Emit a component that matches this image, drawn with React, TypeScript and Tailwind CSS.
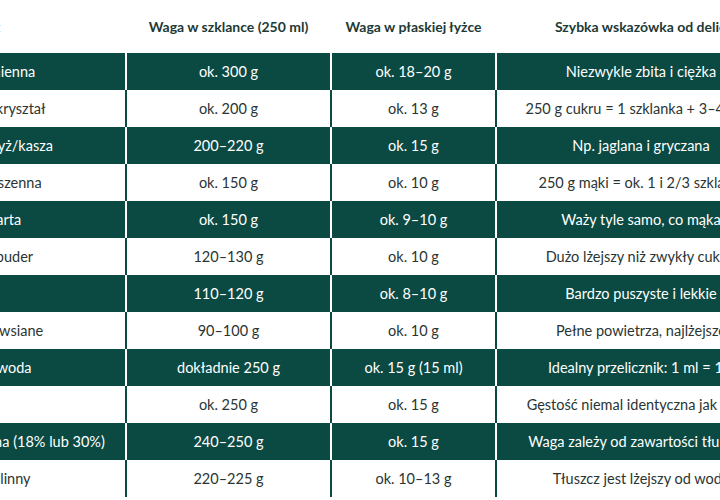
import React from "react";

type Row = [string, string, string, string];

const rows: Row[] = [
  ["Sól kamienna", "ok. 300 g", "ok. 18–20 g", "Niezwykle zbita i ciężka"],
  ["Cukier kryształ", "ok. 200 g", "ok. 13 g", "250 g cukru = 1 szklanka + 3–4 łyżki"],
  ["Suchy ryż/kasza", "200–220 g", "ok. 15 g", "Np. jaglana i gryczana"],
  ["Mąka pszenna", "ok. 150 g", "ok. 10 g", "250 g mąki = ok. 1 i 2/3 szklanki"],
  ["Bułka tarta", "ok. 150 g", "ok. 9–10 g", "Waży tyle samo, co mąka"],
  ["Cukier puder", "120–130 g", "ok. 10 g", "Dużo lżejszy niż zwykły cukier"],
  ["Kakao", "110–120 g", "ok. 8–10 g", "Bardzo puszyste i lekkie"],
  ["Płatki owsiane", "90–100 g", "ok. 10 g", "Pełne powietrza, najlżejsze"],
  ["Czysta woda", "dokładnie 250 g", "ok. 15 g (15 ml)", "Idealny przelicznik: 1 ml = 1 g"],
  ["Mleko", "ok. 250 g", "ok. 15 g", "Gęstość niemal identyczna jak woda"],
  ["Śmietana (18% lub 30%)", "240–250 g", "ok. 15 g", "Waga zależy od zawartości tłuszczu"],
  ["Olej roślinny", "220–225 g", "ok. 10–13 g", "Tłuszcz jest lżejszy od wody"],
];

export default function App() {
  return (
    <div
      className="w-[720px] h-[500px] overflow-hidden bg-white"
      style={{ fontFamily: "Lato, 'Noto Sans', sans-serif" }}
    >
      <table className="ml-[-66px] w-[851px] table-fixed border-separate border-spacing-0 text-[14.5px]">
        <colgroup>
          <col className="w-[191px]" />
          <col className="w-[205px]" />
          <col className="w-[165px]" />
          <col className="w-[290px]" />
        </colgroup>
        <thead>
          <tr className="h-[53px] text-[#1d3a36] font-bold text-[14px]">
            <th className="pl-4 text-left font-bold whitespace-nowrap">Produkt</th>
            <th className="border-l-2 border-white text-center font-bold whitespace-nowrap">Waga w szklance (250 ml)</th>
            <th className="border-l-2 border-white text-center font-bold whitespace-nowrap">Waga w płaskiej łyżce</th>
            <th className="border-l-2 border-white text-center font-bold whitespace-nowrap">Szybka wskazówka od delio</th>
          </tr>
        </thead>
        <tbody>
          {rows.map((r, i) => {
            const dark = i % 2 === 0;
            const rowCls = dark ? "bg-[#0b4a43] text-white" : "bg-white text-[#2a3533]";
            const sep = dark ? "border-l-2 border-white" : "border-l-2 border-[#0b4a43]";
            return (
              <tr key={i} className={`h-[37px] ${rowCls}`}>
                <td className="pl-[17px] text-left whitespace-nowrap">{r[0]}</td>
                <td className={`${sep} text-center whitespace-nowrap`}>{r[1]}</td>
                <td className={`${sep} text-center whitespace-nowrap`}>{r[2]}</td>
                <td className={`${sep} text-center whitespace-nowrap`}>{r[3]}</td>
              </tr>
            );
          })}
        </tbody>
      </table>
    </div>
  );
}
